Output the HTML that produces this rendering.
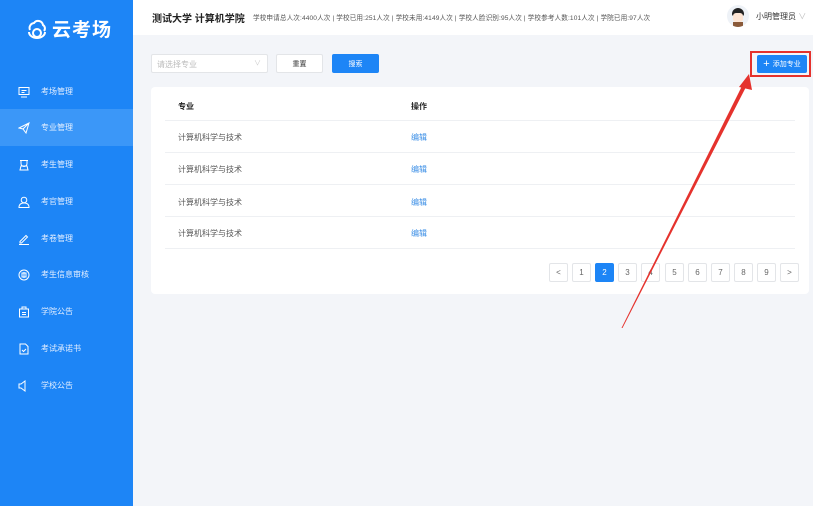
<!DOCTYPE html>
<html><head><meta charset="utf-8"><style>
*{margin:0;padding:0;box-sizing:border-box}
body{width:813px;height:506px;overflow:hidden;background:#f3f5f9;font-family:"Liberation Sans","Noto Sans CJK SC",sans-serif;position:relative}
.side{position:absolute;left:0;top:0;width:133px;height:506px;background:#1d85f6}
.logo{position:absolute;left:26px;top:15px;color:#fff;font-size:19px;font-weight:bold;display:flex;align-items:center;gap:4px;letter-spacing:1px}
.mi{position:absolute;left:0;width:133px;height:37px;color:#e6f0ff;font-size:8px;display:flex;align-items:center}
.mi svg{position:absolute;left:18px}
.mi span{position:absolute;left:41px}
.mi.act{background:#3b97f8}
.hdr{position:absolute;left:133px;top:0;right:0;height:35px;background:#fff}
.abs{position:absolute}
.btn{position:absolute;font-size:7px;display:flex;align-items:center;justify-content:center;border-radius:2px}
.card{position:absolute;left:151px;top:87px;width:658px;height:207px;background:#fff;border-radius:4px}
.line{position:absolute;left:14px;width:630px;height:1px;background:#eef0f3}
.t{position:absolute;font-size:8px;color:#555}
.pg{position:absolute;top:176px;width:19px;height:19px;border:1px solid #e3e5e8;border-radius:2px;font-size:8px;color:#666;display:flex;align-items:center;justify-content:center;background:#fff}
</style></head><body>
<div class="side">
<div class="logo"><svg width="22" height="22" viewBox="0 0 22 22" fill="none" stroke="#fff" stroke-width="2"><path d="M4 12a5 5 0 0 1 4-7 5 5 0 0 1 9 2 4 4 0 0 1 1 6"/><circle cx="11" cy="15" r="4"/><path d="M3 14a8 6 0 0 0 16 0"/></svg><span>云考场</span></div>
<div class="mi" style="top:73px"><svg width="12" height="12" viewBox="0 0 12 12" fill="none" stroke="#fff"><rect x="1" y="1.5" width="10" height="7"/><path d="M3 11h6M3.5 4.5h5M3.5 6.5h3"/></svg><span>考场管理</span></div>
<div class="mi act" style="top:109px"><svg width="12" height="12" viewBox="0 0 12 12" fill="none" stroke="#fff"><path d="M1 6l10-5-3 10-3-4z M5 7l6-6"/></svg><span>专业管理</span></div>
<div class="mi" style="top:146px"><svg width="12" height="12" viewBox="0 0 12 12" fill="none" stroke="#fff"><path d="M2 1.5h8M3 1.5v3a3 3 0 0 0 6 0v-3M2 11l1-4h6l1 4z"/></svg><span>考生管理</span></div>
<div class="mi" style="top:183px"><svg width="12" height="12" viewBox="0 0 12 12" fill="none" stroke="#fff"><circle cx="6" cy="4" r="2.8"/><path d="M1 11.5c0-3 2-4.5 5-4.5s5 1.5 5 4.5z"/></svg><span>考官管理</span></div>
<div class="mi" style="top:220px"><svg width="12" height="12" viewBox="0 0 12 12" fill="none" stroke="#fff"><path d="M2 8.5l6-6 1.5 1.5-6 6H2zM1 11.5h10"/></svg><span>考卷管理</span></div>
<div class="mi" style="top:256px"><svg width="12" height="12" viewBox="0 0 12 12" fill="none" stroke="#fff"><circle cx="6" cy="6" r="5"/><path d="M4 4h4v4H4zM6 3v6"/></svg><span>考生信息审核</span></div>
<div class="mi" style="top:293px"><svg width="12" height="12" viewBox="0 0 12 12" fill="none" stroke="#fff"><rect x="1.5" y="3" width="9" height="8"/><path d="M4 3V1h4v2M4 6.5h4M4 8.5h4"/></svg><span>学院公告</span></div>
<div class="mi" style="top:330px"><svg width="12" height="12" viewBox="0 0 12 12" fill="none" stroke="#fff"><path d="M2 1h5.5L10 3.5V11H2zM4 7l1.5 1.5L8 6"/></svg><span>考试承诺书</span></div>
<div class="mi" style="top:367px"><svg width="12" height="12" viewBox="0 0 12 12" fill="none" stroke="#fff"><path d="M1 4h2l4-3v10L3 8H1zM9.5 4.5v0M9.5 7.5v0"/></svg><span>学校公告</span></div>
</div>
<div class="hdr">
<div class="abs" style="left:19px;top:10px;font-size:10px;font-weight:bold;color:#222">测试大学 计算机学院</div>
<div class="abs" style="left:120px;top:12px;font-size:6.6px;letter-spacing:0.12px;color:#555;white-space:nowrap">学校申请总人次:4400人次 | 学校已用:251人次 | 学校未用:4149人次 | 学校人脸识别:95人次 | 学校参考人数:101人次 | 学院已用:97人次</div>
<div class="abs" style="left:594px;top:5px;width:22px;height:22px;border-radius:50%;background:#eef2f7;overflow:hidden"><div style="position:absolute;left:5px;top:3px;width:12px;height:8px;background:#222;border-radius:6px 6px 2px 2px"></div><div style="position:absolute;left:6px;top:8px;width:10px;height:9px;background:#fde5d4;border-radius:3px"></div><div style="position:absolute;left:6px;top:17px;width:10px;height:5px;background:#8a5a3a"></div></div>
<div class="abs" style="left:623px;top:11px;font-size:8px;color:#333">小明管理员 <span style="color:#bbb">∨</span></div>
</div>
<div class="abs" style="left:151px;top:54px;width:117px;height:19px;background:#fff;border:1px solid #e3e5e8;border-radius:2px;font-size:8px;color:#bbb;padding:4px 5px">请选择专业<span style="position:absolute;right:6px;top:3px;color:#ccc;font-size:7px">∨</span></div>
<div class="btn" style="left:276px;top:54px;width:47px;height:19px;background:#fff;border:1px solid #e3e5e8;color:#333">重置</div>
<div class="btn" style="left:332px;top:54px;width:47px;height:19px;background:#1d85f6;color:#fff">搜索</div>
<div class="btn" style="left:757px;top:55px;width:50px;height:18px;background:#1d85f6;color:#fff"><span style="font-size:11px;margin-right:3px">+</span>添加专业</div>
<div class="abs" style="left:750px;top:51px;width:61px;height:26px;border:2px solid #e5322d"></div>
<div class="card">
<div class="t" style="left:27px;top:14px;color:#222;font-weight:bold">专业</div>
<div class="t" style="left:260px;top:14px;color:#222;font-weight:bold">操作</div>
<div class="line" style="top:33px"></div>
<div class="t" style="left:27px;top:45px">计算机科学与技术</div><div class="t" style="left:260px;top:45px;color:#3a8ee6">编辑</div>
<div class="line" style="top:65px"></div>
<div class="t" style="left:27px;top:77px">计算机科学与技术</div><div class="t" style="left:260px;top:77px;color:#3a8ee6">编辑</div>
<div class="line" style="top:97px"></div>
<div class="t" style="left:27px;top:110px">计算机科学与技术</div><div class="t" style="left:260px;top:110px;color:#3a8ee6">编辑</div>
<div class="line" style="top:129px"></div>
<div class="t" style="left:27px;top:141px">计算机科学与技术</div><div class="t" style="left:260px;top:141px;color:#3a8ee6">编辑</div>
<div class="line" style="top:161px"></div>
<div class="pg" style="left:398px">&lt;</div>
<div class="pg" style="left:421px">1</div>
<div class="pg" style="left:444px;background:#1d85f6;border-color:#1d85f6;color:#fff">2</div>
<div class="pg" style="left:467px">3</div>
<div class="pg" style="left:490px">4</div>
<div class="pg" style="left:514px">5</div>
<div class="pg" style="left:537px">6</div>
<div class="pg" style="left:560px">7</div>
<div class="pg" style="left:583px">8</div>
<div class="pg" style="left:606px">9</div>
<div class="pg" style="left:629px">&gt;</div>
</div>
<svg class="abs" style="left:0;top:0" width="813" height="506"><polygon points="621.5,328 622.5,328 746.5,86 743,84" fill="#e5322d"/><polygon points="749,74 739,87 752,90" fill="#e5322d"/></svg>
</body></html>
